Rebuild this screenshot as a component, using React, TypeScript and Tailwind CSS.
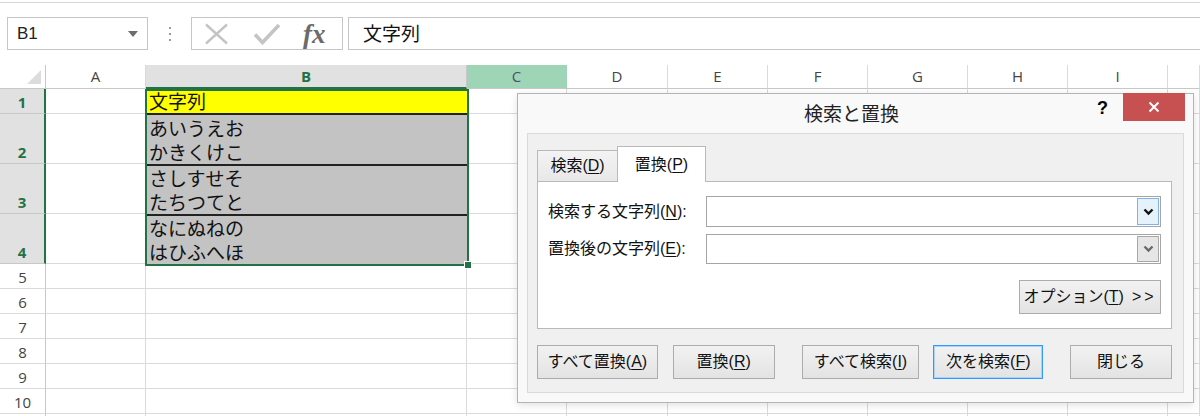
import React from "react";

const colHeads = ["A", "B", "C", "D", "E", "F", "G", "H", "I", ""];
const rows = [1, 2, 3, 4, 5, 6, 7, 8, 9, 10, 11];

const U = ({ children }: { children: React.ReactNode }) => <span className="underline underline-offset-2">{children}</span>;

function Chevron({ dark }: { dark?: boolean }) {
  return (
    <svg width="11" height="8" viewBox="0 0 11 8">
      <path d="M1.5 1.5l4 4 4-4" fill="none" stroke={dark ? "#111" : "#6a6a6a"} strokeWidth="2.4" />
    </svg>
  );
}

function Btn({ children, w, focus, className = "" }: { children: React.ReactNode; w: string; focus?: boolean; className?: string }) {
  return (
    <div
      className={
        "flex h-[34px] items-center justify-center bg-linear-to-b from-[#f2f2f2] to-[#e3e3e3] text-[16px] text-[#111] " +
        (focus ? "border border-[#3399ff] shadow-[inset_0_0_0_1px_#a9d3fb] " : "border border-[#acacac] ") +
        w +
        " " +
        className
      }
    >
      {children}
    </div>
  );
}

function FindReplaceDialog() {
  return (
    <div className="absolute left-[517px] top-[93px] flex h-[310px] w-[677px] flex-col border border-[#b4b4b4] bg-[#f9f9f9] shadow-[0_2px_8px_rgba(0,0,0,0.12)]">
      {/* title bar */}
      <div className="flex h-[39px] items-start">
        <div className="flex-1" />
        <span className="mt-[9px] text-[19px] leading-[24px] text-[#222]">検索と置換</span>
        <div className="flex flex-1 items-start justify-end pr-[8px]">
          <span className="mr-[15px] mt-[4px] text-[18px] font-bold leading-[20px] text-black">?</span>
          <div className="-mt-px flex h-[28px] w-[62px] items-center justify-center bg-[#c75050]">
            <svg width="12" height="12" viewBox="0 0 12 12">
              <path d="M1.5 1.5l9 9M10.5 1.5l-9 9" stroke="#fff" strokeWidth="2" />
            </svg>
          </div>
        </div>
      </div>

      {/* client area */}
      <div className="mx-[9px] mb-[9px] flex flex-1 flex-col border border-[#dadada] bg-[#f0f0f0] pl-[9px] pr-[11px] pt-[12px]">
        {/* tabs */}
        <div className="flex h-[35px] items-end">
          <div className="flex h-[31px] w-[81px] items-center justify-center border border-b-0 border-[#b9b9b9] bg-linear-to-b from-[#f3f3f3] to-[#e8e8e8] text-[16px] text-[#111]">
            検索(<U>D</U>)
          </div>
          <div className="relative z-10 -mb-px -ml-px flex h-[36px] w-[89px] items-center justify-center border border-b-0 border-[#b9b9b9] bg-white text-[16px] text-[#111]">
            置換(<U>P</U>)
          </div>
        </div>
        <div className="flex h-[148px] w-[635px] flex-col border border-[#b9b9b9] bg-white pl-[10px] pr-[10px] pt-[14px]">
          <div className="flex h-[31px] items-center">
            <span className="w-[158px] text-[16px] text-[#111]">
              検索する文字列(<U>N</U>):
            </span>
            <div className="flex h-[31px] w-[456px] items-stretch justify-end border border-[#a5a5a5] bg-white p-px">
              <div className="flex w-[22px] items-center justify-center border border-[#7eb4ea] bg-[#e5f1fb]">
                <Chevron dark />
              </div>
            </div>
          </div>
          <div className="mt-[7px] flex h-[30px] items-center">
            <span className="w-[158px] text-[16px] text-[#111]">
              置換後の文字列(<U>E</U>):
            </span>
            <div className="flex h-[30px] w-[456px] items-stretch justify-end border border-[#a5a5a5] bg-white p-px">
              <div className="flex w-[22px] items-center justify-center border border-[#a8a8a8] bg-[#e6e6e6]">
                <Chevron />
              </div>
            </div>
          </div>
          <div className="mt-[16px] flex justify-end">
            <Btn w="w-[142px]">
              オプション(<U>T</U>)<span className="ml-[8px] tracking-[3px]">&gt;&gt;</span>
            </Btn>
          </div>
        </div>

        {/* buttons */}
        <div className="mt-[16px] flex">
          <Btn w="w-[121px]">
            すべて置換(<U>A</U>)
          </Btn>
          <Btn w="w-[102px]" className="ml-[15px]">
            置換(<U>R</U>)
          </Btn>
          <Btn w="w-[118px]" className="ml-[27px]">
            すべて検索(<U>I</U>)
          </Btn>
          <Btn w="w-[110px]" focus className="ml-[14px]">
            次を検索(<U>F</U>)
          </Btn>
          <Btn w="w-[102px]" className="ml-[27px]">
            閉じる
          </Btn>
        </div>
      </div>
    </div>
  );
}

function FormulaBar() {
  return (
    <div className="h-[65px] bg-white">
      <div className="h-[3px] border-b border-[#d6d6d6]" />
      <div className="mt-[14px] flex h-[33px] items-stretch">
        <div className="ml-[7px] flex w-[141px] items-center justify-between border border-[#c6c6c6] pl-[9px] pr-[9px]">
          <span className="text-[17px] text-[#222]">B1</span>
          <svg width="10" height="6" viewBox="0 0 10 6">
            <path d="M0 0h10L5 6z" fill="#6d6d6d" />
          </svg>
        </div>
        <div className="flex w-[43px] flex-col items-center justify-center gap-[4px]">
          <span className="h-[2px] w-[2px] bg-[#9a9a9a]" />
          <span className="h-[2px] w-[2px] bg-[#9a9a9a]" />
          <span className="h-[2px] w-[2px] bg-[#9a9a9a]" />
        </div>
        <div className="flex w-[152px] items-center border border-[#c6c6c6] pl-[11px]">
          <svg width="28" height="22" viewBox="0 0 28 22">
            <path d="M3 1.5l21 19M24 1.5l-21 19" stroke="#c4c4c4" strokeWidth="2.4" />
          </svg>
          <svg width="28" height="22" viewBox="0 0 28 22" className="ml-[22px]">
            <path d="M2 11.5l7.5 8L26 2" fill="none" stroke="#c4c4c4" strokeWidth="3.6" />
          </svg>
          <span className="ml-[22px] font-['Liberation_Serif',serif] text-[27px] font-bold italic leading-[26px] text-[#6b6b6b]">fx</span>
        </div>
        <div className="ml-[5px] flex flex-1 items-center border border-r-0 border-[#c6c6c6] pl-[14px]">
          <span className="font-['Noto_Sans_CJK_JP',sans-serif] text-[19px] text-[#111]">文字列</span>
        </div>
      </div>
    </div>
  );
}

function Sheet() {
  const cell = "border-r border-b border-[#dadada]";
  return (
    <div className="grid grid-cols-[46px_100px_321px_100px_101px_100px_100px_100px_100px_100px_1fr] grid-rows-[24px_25px_50px_50px_50px_25px_25px_25px_25px_25px_25px_25px] font-['Open_Sans',sans-serif]">
      {/* corner */}
      <div className="flex items-end justify-end border-r border-b border-[#c8c8c8] pb-[4px] pr-[4px]">
        <svg width="14" height="14" viewBox="0 0 14 14">
          <path d="M14 0v14H0z" fill="#dcdcdc" />
        </svg>
      </div>
      {colHeads.map((c) => (
        <div
          key={"h" + c}
          className={
            "flex items-center justify-center border-r text-[15px] " +
            (c === "B"
              ? "border-b-2 border-r-[#c8c8c8] border-b-[#217346] bg-[#e1e1e1] font-bold text-[#217346]"
              : c === "C"
                ? "border-b border-[#9fd5b7] border-b-[#c8c8c8] bg-[#9fd5b7] text-[#44546a]"
                : "border-b border-r-[#dadada] border-b-[#c8c8c8] text-[#444]")
          }
        >
          {c}
        </div>
      ))}

      {/* selected block B1:B4 */}
      <div className="relative col-start-3 row-start-2 row-span-4 -mb-[2px] -ml-px -mr-[2px] flex flex-col border-2 border-[#217346] font-['Noto_Sans_CJK_JP',sans-serif] text-[19px] leading-[24px] text-[#111]">
        <div className="flex h-[24px] items-end border-b-2 border-[#222] bg-[#ffff00] pl-[2px]">文字列</div>
        <div className="flex h-[51px] flex-col justify-end border-b-2 border-[#222] bg-[#c3c3c3] pl-[2px]">
          <span className="h-[24px]">あいうえお</span>
          <span className="h-[24px]">かきくけこ</span>
        </div>
        <div className="flex h-[50px] flex-col justify-end border-b-2 border-[#222] bg-[#c3c3c3] pl-[2px]">
          <span className="h-[24px]">さしすせそ</span>
          <span className="h-[24px]">たちつてと</span>
        </div>
        <div className="flex flex-1 flex-col justify-end bg-[#c3c3c3] pl-[2px]">
          <span className="h-[24px]">なにぬねの</span>
          <span className="h-[24px]">はひふへほ</span>
        </div>
        <div className="absolute -bottom-[5px] -right-[5px] h-[8px] w-[8px] border border-white bg-[#217346]" />
      </div>

      {rows.map((r) => (
        <React.Fragment key={r}>
          <div
            className={
              "flex items-end justify-center border-b pb-[1px] text-[15px] leading-[20px] " +
              (r <= 4
                ? "border-r-2 border-r-[#217346] border-b-[#c8c8c8] bg-[#e1e1e1] font-bold text-[#217346]"
                : "border-r border-r-[#c8c8c8] border-b-[#dadada] text-[#444]")
            }
          >
            {r <= 10 ? r : ""}
          </div>
          {colHeads.map((c) => (c === "B" && r <= 4 ? null : <div key={c + r} className={cell} />))}
        </React.Fragment>
      ))}
    </div>
  );
}

export default function App() {
  return (
    <div className="relative h-[416px] w-[1200px] overflow-hidden bg-white font-['Liberation_Sans','Noto_Sans_CJK_JP',sans-serif]">
      <FormulaBar />
      <Sheet />
      <FindReplaceDialog />
    </div>
  );
}
